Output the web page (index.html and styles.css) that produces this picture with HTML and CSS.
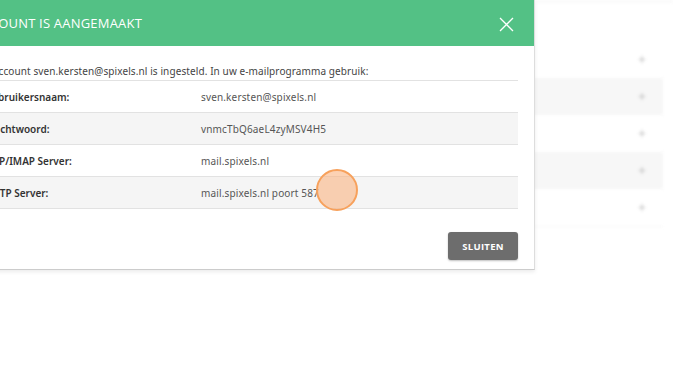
FILE: index.html
```html
<!DOCTYPE html>
<html lang="nl">
<head>
    <meta charset="UTF-8">
    <meta name="viewport" content="width=device-width, initial-scale=1.0">
    <title>Account aangemaakt</title>
    <link rel="stylesheet" href="styles.css">
</head>
<body>
    <main class="page">
        <ul class="list">
            <li class="row"><span class="plus">+</span></li>
            <li class="row alt"><span class="plus">+</span></li>
            <li class="row"><span class="plus">+</span></li>
            <li class="row alt"><span class="plus">+</span></li>
            <li class="row"><span class="plus">+</span></li>
        </ul>
    </main>

    <div class="modal">
        <div class="modal-header">
            <h2>Account is aangemaakt</h2>
            <button class="close" aria-label="Sluiten">
                <svg width="15" height="15" viewBox="0 0 15 15">
                    <path d="M1 1 L14 14 M14 1 L1 14" stroke="#ffffff" stroke-width="1.3" fill="none"/>
                </svg>
            </button>
        </div>
        <div class="modal-body">
            <p class="intro">Account sven.kersten@spixels.nl is ingesteld. In uw e-mailprogramma gebruik:</p>
            <table class="details">
                <tr>
                    <td class="label">Gebruikersnaam:</td>
                    <td>sven.kersten@spixels.nl</td>
                </tr>
                <tr class="alt">
                    <td class="label">Wachtwoord:</td>
                    <td>vnmcTbQ6aeL4zyMSV4H5</td>
                </tr>
                <tr>
                    <td class="label">POP/IMAP Server:</td>
                    <td>mail.spixels.nl</td>
                </tr>
                <tr class="alt">
                    <td class="label">SMTP Server:</td>
                    <td>mail.spixels.nl poort 587</td>
                </tr>
            </table>
            <div class="modal-footer">
                <button class="btn">Sluiten</button>
            </div>
        </div>
    </div>

    <div class="cursor"></div>
</body>
</html>
```

FILE: styles.css
```css
body {
    margin: 0;
    font-family: 'Noto Sans', sans-serif;
    background-color: #ffffff;
    color: #444444;
    overflow: hidden;
    height: 376px;
}

.page {
    padding: 38px 10px 0 0;
    border-top: 3px solid #f6f6f6;
    filter: blur(1.5px);
    opacity: 0.6;
}

.list {
    list-style: none;
    margin: 0;
    padding: 0;
    border-bottom: 1px solid #eeeeee;
}

.row {
    height: 37px;
    display: flex;
    align-items: center;
    justify-content: flex-end;
}

.row.alt {
    background-color: #f2f2f2;
}

.plus {
    width: 10px;
    margin-right: 16px;
    color: #999999;
    font-size: 14px;
    text-align: center;
}

.modal {
    position: absolute;
    left: -42px;
    top: 0;
    width: 576px;
    background-color: #ffffff;
    border-right: 1px solid #dddddd;
    border-bottom: 1px solid #cccccc;
    box-shadow: 0 2px 4px rgba(0, 0, 0, 0.08);
}

.modal-header {
    height: 46px;
    background-color: #53c185;
    display: flex;
    align-items: center;
    justify-content: space-between;
    padding: 0 20px 0 15px;
}

.modal-header h2 {
    margin: 0;
    color: #ffffff;
    font-family: 'Open Sans', sans-serif;
    font-size: 13px;
    font-weight: 400;
    text-transform: uppercase;
    letter-spacing: 0.2px;
}

.close {
    background: none;
    border: none;
    padding: 0;
    display: flex;
    margin-top: 3px;
}

.modal-body {
    padding: 18px 16px 9px 27px;
}

.intro {
    margin: 0 0 2px 0;
    padding-left: 7px;
    font-size: 10px;
    line-height: 14px;
    letter-spacing: 0.1px;
    color: #444444;
}

.details {
    width: 100%;
    border-collapse: collapse;
    border-top: 1px solid #e2e2e2;
    font-size: 10px;
}

.details td {
    height: 31px;
    padding: 0;
    border-bottom: 1px solid #e2e2e2;
    color: #555555;
    letter-spacing: 0.15px;
}

.details td.label {
    width: 216px;
    font-weight: 600;
    color: #333333;
    letter-spacing: 0;
}

.details tr.alt {
    background-color: #f5f5f5;
}

.modal-footer {
    display: flex;
    justify-content: flex-end;
    margin-top: 23px;
}

.btn {
    width: 70px;
    height: 28px;
    background-color: #6d6d6d;
    color: #ffffff;
    border: none;
    border-radius: 3px;
    font-family: 'Open Sans', sans-serif;
    font-size: 9.5px;
    font-weight: 700;
    text-transform: uppercase;
    letter-spacing: 0.3px;
    box-shadow: 0 1px 2px rgba(0, 0, 0, 0.25);
}

.cursor {
    position: absolute;
    left: 316px;
    top: 169px;
    width: 38px;
    height: 38px;
    border: 2px solid #f7a15c;
    border-radius: 50%;
    background-color: rgba(250, 180, 130, 0.6);
}
```
